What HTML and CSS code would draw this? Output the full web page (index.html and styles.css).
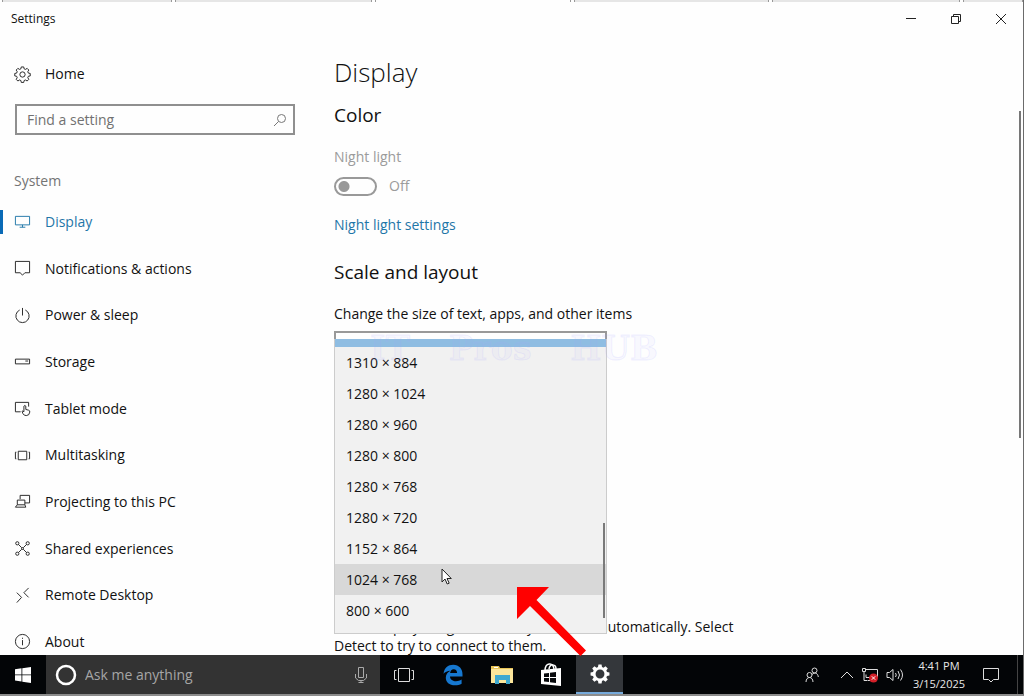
FILE: index.html
```html
<!DOCTYPE html>
<html lang="en">
<head>
    <meta charset="UTF-8">
    <meta name="viewport" content="width=device-width, initial-scale=1.0">
    <title>Settings</title>
    <link rel="stylesheet" href="styles.css">
</head>
<body>
    <div class="tabstrip">
      <span></span><span></span><span class="active"></span><span></span><span></span><span></span>
    </div>

    <header class="titlebar">
      <span class="title">Settings</span>
      <div class="window-buttons">
        <button type="button" aria-label="Minimize">
          <svg width="12" height="12" viewBox="0 0 12 12"><path d="M1 5.5h10"/></svg>
        </button>
        <button type="button" aria-label="Restore">
          <svg width="12" height="12" viewBox="0 0 12 12"><path d="M1.5 3.5h7v7h-7zM3.5 3.500v-2h7v7h-2"/></svg>
        </button>
        <button type="button" aria-label="Close">
          <svg width="12" height="12" viewBox="0 0 12 12"><path d="M1 1l10 10M11 1L1 11"/></svg>
        </button>
      </div>
    </header>

    <div class="window">
      <aside class="sidebar">
        <a class="item home" href="#">
          <svg viewBox="0 0 18 18"><path d="M7.700 1h2.600l.4 2 1.500.6 1.700-1.100 1.800 1.800-1.100 1.700.6 1.500 2 .4v2.600l-2 .4-.6 1.500 1.100 1.700-1.800 1.800-1.700-1.100-1.500.6-.4 2H7.700l-.4-2-1.500-.6-1.700 1.100-1.800-1.800 1.100-1.700-.6-1.500-2-.4V7.900l2-.4.6-1.500-1.100-1.700 1.800-1.800 1.700 1.100L7.300 3z"/><circle cx="9" cy="9" r="2.800"/></svg>
          Home
        </a>
        <div class="search">
          <input type="text" placeholder="Find a setting" aria-label="Find a setting">
          <svg width="14" height="14" viewBox="0 0 14 14"><circle cx="8.500" cy="5.500" r="4"/><path d="M5.500 8.500L1 13"/></svg>
        </div>
        <h3>System</h3>
        <nav>
          <a class="item current" href="#">
            <svg viewBox="0 0 18 18"><path d="M1.500 2.500h15v9h-15zM9 11.500v2.500M6 14h6"/></svg>
            Display
          </a>
          <a class="item" href="#">
            <svg viewBox="0 0 18 18"><path d="M1.500 1.500h15v12h-5L9 16l-2.500-2.500h-5z"/></svg>
            Notifications &amp; actions
          </a>
          <a class="item" href="#">
            <svg viewBox="0 0 18 18"><path d="M9 1v8M6 3.200a7 7 0 1 0 6 0"/></svg>
            Power &amp; sleep
          </a>
          <a class="item" href="#">
            <svg viewBox="0 0 18 18"><path d="M1.500 6.500h15v5h-15zM12 8.500h3"/></svg>
            Storage
          </a>
          <a class="item" href="#">
            <svg viewBox="0 0 18 18"><path d="M7 12.500H1.500v-10h14V7M10.500 12V6.500q1-1.500 2 0V10l3 .8q1.500.4 1.200 2-.4 3.700-3.700 3.700-2.500 0-3.500-2l-1-2.500q.7-1 2 .5z"/></svg>
            Tablet mode
          </a>
          <a class="item" href="#">
            <svg viewBox="0 0 18 18"><path d="M4.500 4.500h9v9h-9zM2.500 5.500h-1v7h1M15.500 5.500h1v7h-1"/></svg>
            Multitasking
          </a>
          <a class="item" href="#">
            <svg viewBox="0 0 18 18"><path d="M6.500 6.500v-4h10v8h-5M3.500 7.500h8v5h-8zM3.500 12.500l-2 2.500h11l-1-2.500"/></svg>
            Projecting to this PC
          </a>
          <a class="item" href="#">
            <svg viewBox="0 0 18 18"><circle cx="3.500" cy="3.500" r="1.700"/><circle cx="14.500" cy="3.500" r="1.700"/><circle cx="3.500" cy="14.500" r="1.700"/><circle cx="14.500" cy="14.500" r="1.700"/><circle cx="9" cy="9" r="1"/><path d="M4.700 4.700l3.500 3.500M13.300 4.700L9.800 8.200M4.700 13.300l3.500-3.500M13.300 13.300L9.800 9.800"/></svg>
            Shared experiences
          </a>
          <a class="item" href="#">
            <svg viewBox="0 0 18 18"><path d="M3 6l5 5-5 5.500M15.500 1l-5 5 5 5"/></svg>
            Remote Desktop
          </a>
          <a class="item" href="#">
            <svg viewBox="0 0 18 18"><circle cx="9" cy="9" r="7.500"/><path d="M9 7.500V13M9 5v1.200"/></svg>
            About
          </a>
        </nav>
      </aside>

      <main>
        <h1>Display</h1>
        <h2>Color</h2>
        <label class="disabled" for="nightlight">Night light</label>
        <div class="toggle">
          <input type="checkbox" id="nightlight" disabled>
          <span>Off</span>
        </div>
        <a class="link" href="#">Night light settings</a>

        <h2>Scale and layout</h2>
        <label for="scale">Change the size of text, apps, and other items</label>
        <div class="combo">
          <select id="scale"></select>
          <ul class="popup" role="listbox" aria-label="Resolution">
            <li class="selected" role="option" aria-selected="true"></li>
            <li role="option">1310 × 884</li>
            <li role="option">1280 × 1024</li>
            <li role="option">1280 × 960</li>
            <li role="option">1280 × 800</li>
            <li role="option">1280 × 768</li>
            <li role="option">1280 × 720</li>
            <li role="option">1152 × 864</li>
            <li class="hover" role="option">1024 × 768</li>
            <li role="option">800 × 600</li>
          </ul>
          <div class="watermark"><span>IT</span><span>Pros</span><span>HUB</span></div>
          <svg class="cursor" width="12" height="18" viewBox="0 0 12 18"><path d="M1 1v13l3-3 2.200 5 2-.8L6 10.500h4.300z"/></svg>
          <svg class="arrow" width="70" height="70" viewBox="0 0 70 70"><path d="M0 0h32L19.500 13 69 63.500 63.500 69 13 19 0 32z"/></svg>
        </div>
        <p>Older displays might not always connect automatically. Select Detect to try to connect to them.</p>
      </main>

      <div class="scrollbar"></div>
    </div>

    <footer class="taskbar">
      <button class="start" type="button" aria-label="Start">
        <svg width="16" height="16" viewBox="0 0 16 16"><path d="M0 2.300l6.500-1v6.200H0zM7.300 1.200L16 0v7.500H7.300zM0 8.300h6.500v6.200l-6.500-1zM7.300 8.300H16V16l-8.700-1.300z"/></svg>
      </button>
      <div class="ask">
        <svg width="22" height="22" viewBox="0 0 22 22"><circle cx="11" cy="11" r="9" stroke="#fff" stroke-width="2.500"/></svg>
        <input type="text" placeholder="Ask me anything" aria-label="Ask me anything">
        <svg class="mic" width="14" height="18" viewBox="0 0 14 18"><path d="M4.500 1.500h5v10h-5zM1.500 8v4l3 2.500h5l3-2.500V8M7 14.500V17M4.500 16.500h5"/></svg>
      </div>
      <div class="apps">
        <button type="button" aria-label="Task view">
          <svg width="20" height="16" viewBox="0 0 20 16"><path fill="none" stroke="#ddd" d="M4.500 1.500h11v13h-11zM2.500 3.500h-2v9h2M17.500 3.500h2v9h-2"/></svg>
        </button>
        <button type="button" aria-label="Edge">
          <svg width="20" height="22" viewBox="0 0 20 22"><path fill="#1678d0" d="M.5 9.700C1.300 4 5 .8 10.200.8c6 0 9.300 4.300 9.300 9.500v2.200H7c.2 3.300 3 4.700 6 4.700 2.100 0 4-.6 5.600-1.600v4.200c-1.900 1-4.200 1.500-6.500 1.500-6 0-9.300-3.200-9.300-7.600 0-3.200 1.800-5.700 4.600-7C4.300 6.900 2.200 8 .5 9.700zM7.100 9h7c0-2.500-1.300-3.800-3.400-3.800S7.500 6.700 7.100 9z"/></svg>
        </button>
        <button type="button" aria-label="File Explorer">
          <svg width="22" height="20" viewBox="0 0 22 20"><path fill="#e9c558" d="M0 1h8l1 2h13v15H0z"/><path fill="#fbe69b" d="M0 4h22v14H0z"/><path fill="#fff" d="M3 2h4v1H3z"/><path fill="#3fa9d0" d="M4 10h15v9h-4v-4H8v4H4z"/></svg>
        </button>
        <button type="button" aria-label="Store">
          <svg width="22" height="24" viewBox="0 0 22 24"><path fill="none" stroke="#fff" stroke-width="1.500" d="M5 8c0-9 8-9 9-2M9 6c1-6 7-5 7 0"/><path fill="#fff" d="M1 7l20-2v18L1 21z"/><path fill="#080a0d" d="M4 10.500l5-.6v4H4zM10 9.800l6-.8v5h-6zM4 15h5v4l-5-.5zM10 15h6v5l-6-.8z"/></svg>
        </button>
        <button class="open" type="button" aria-label="Settings">
          <svg width="20" height="20" viewBox="0 0 18 18"><path fill="#fff" fill-rule="evenodd" d="M7.600.5h2.800l.4 2.200 1.300.6 1.900-1.300 2 2-1.300 1.900.6 1.300 2.200.4v2.800l-2.200.4-.6 1.300 1.300 1.900-2 2-1.900-1.300-1.300.6-.4 2.200H7.600l-.4-2.200-1.300-.6L4 16l-2-2 1.300-1.900-.6-1.300-2.200-.4V7.600l2.200-.4.6-1.300L2 4l2-2 1.900 1.300 1.300-.6zM9 5a4 4 0 1 0 0 8 4 4 0 0 0 0-8z"/></svg>
        </button>
      </div>
      <div class="tray">
        <svg width="14" height="16" viewBox="0 0 14 16"><circle cx="9.500" cy="3.500" r="2.500"/><circle cx="4.500" cy="8" r="2.500"/><path d="M1 15c0-6 7-6 7 0M7 7.500c3-3 6-1 6.300 2.500"/></svg>
        <svg class="chevron" width="14" height="8" viewBox="0 0 14 8"><path d="M1 7l6-6 6 6"/></svg>
        <svg width="18" height="16" viewBox="0 0 18 16"><path d="M5 2.500h11.500v8M5 7.500v3h4M6.500 13.500H10M1.500 1.500h3v3h-3zM3 5v8.500h3"/><circle cx="12.500" cy="11" r="4.500" fill="#d32029" stroke="none"/><path d="M10.800 9.300l3.400 3.400M14.200 9.300l-3.400 3.400" stroke="#fff"/></svg>
        <svg width="18" height="14" viewBox="0 0 18 14"><path d="M1 4.500h2.500L7 1.500v11l-3.500-3H1zM9.500 5q1.500 2 0 4M12 3q3 4 0 8M14.500 1.500q4 5.500 0 11"/></svg>
        <div class="clock"><span>4:41 PM</span><span>3/15/2025</span></div>
        <svg class="action" width="18" height="18" viewBox="0 0 18 18"><path d="M1.500 2.500h15v11h-5L9 16l-2.500-2.500h-5z"/></svg>
      </div>
    </footer>
</body>
</html>
```
FILE: styles.css
```css
* {
    margin: 0;
    padding: 0;
    box-sizing: border-box;
}

body {
    display: flex;
    flex-direction: column;
    height: 100vh;
    overflow: hidden;
    background-color: #fefefe;
    border-right: 1px solid #6b6b6b;
    border-bottom: 2px solid #8c8c8c;
    color: #111;
    font-family: "Open Sans", "Noto Sans", sans-serif;
    font-size: 14px;
    line-height: 20px;
}

button, input, select {
    font: inherit;
    border: none;
    background: none;
}

a {
    color: inherit;
    text-decoration: none;
}

svg {
    flex: none;
    fill: none;
    stroke: #222;
}

/* strip of tabs above the window */
.tabstrip {
    display: grid;
    grid-template-columns: 170fr 196fr 196fr 194fr 188fr 60fr;
    gap: 3px;
    height: 2px;
    padding-left: 2px;
}

.tabstrip span {
    background-color: #e6e6e6;
    border-left: 1px solid #999;
    border-right: 1px solid #999;
}

.tabstrip .active {
    background-color: #fefefe;
}

.titlebar {
    display: flex;
    justify-content: space-between;
    align-items: center;
    height: 33px;
    padding-left: 11px;
    font-size: 12px;
}

.window-buttons {
    display: flex;
}

.window-buttons button {
    display: flex;
    align-items: center;
    justify-content: center;
    width: 45px;
    height: 32px;
}

.window {
    display: flex;
    flex: 1;
    min-height: 0;
}

.sidebar {
    display: flex;
    flex-direction: column;
    width: 320px;
    padding: 27px 0 1px;
}

.item {
    display: flex;
    align-items: center;
    gap: 14px;
    height: 24px;
    padding-left: 14px;
}

.item svg {
    width: 17px;
    height: 17px;
}

.search {
    display: flex;
    align-items: center;
    height: 31px;
    margin: 18px 25px 0 15px;
    padding: 0 6px 0 10px;
    border: 2px solid #8f8f8f;
}

.search input {
    flex: 1;
    min-width: 0;
}

.search svg {
    stroke: #777;
}

::placeholder {
    color: #717171;
    opacity: 1;
}

h3 {
    margin: 36px 0 19px 14px;
    color: #747474;
    font-size: 14px;
    font-weight: 400;
}

nav {
    display: flex;
    flex: 1;
    flex-direction: column;
    justify-content: space-between;
}

.current {
    padding-left: 11px;
    border-left: 3px solid #0a6ab6;
    color: #1f76a8;
}

.current svg {
    stroke: #1f76a8;
}

main {
    display: flex;
    flex: 1;
    flex-direction: column;
    align-items: flex-start;
    padding: 19px 0 0 14px;
}

h1 {
    font-size: 26px;
    font-weight: 300;
    line-height: 36px;
}

h2 {
    font-size: 19px;
    font-weight: 400;
    line-height: 26px;
    margin: 12px 0 19px;
}

.disabled, .toggle {
    color: #9b9b9b;
}

.toggle {
    display: flex;
    align-items: center;
    gap: 12px;
    margin: 9px 0 19px;
}

.toggle input {
    appearance: none;
    width: 43px;
    height: 19px;
    border: 2px solid #999;
    border-radius: 10px;
    background: radial-gradient(circle at 8px 50%, #999 5px, transparent 6px);
}

.link {
    color: #1f76a8;
    margin-bottom: 12px;
}

.combo {
    position: relative;
    width: 273px;
    margin: 7px 0 254px;
}

.combo select {
    display: block;
    appearance: none;
    width: 100%;
    height: 32px;
    border: 2px solid #999;
}

.popup {
    position: absolute;
    top: 8px;
    left: 0;
    width: 100%;
    padding-bottom: 7px;
    border: 1px solid #ccc;
    border-top: none;
    background-color: #f1f1f1;
    list-style: none;
}

.popup::after {
    content: "";
    position: absolute;
    right: 1px;
    bottom: 15px;
    width: 2px;
    height: 95px;
    background-color: #7a7a7a;
}

.popup li {
    height: 31px;
    padding-left: 11px;
    line-height: 31px;
}

.popup .selected {
    height: 8px;
    background-color: #8fbde2;
}

.popup .hover {
    background-color: #d8d8d8;
}

.watermark {
    position: absolute;
    top: 0;
    left: 36px;
    display: flex;
    justify-content: space-between;
    width: 288px;
    color: rgba(170, 170, 255, 0.08);
    font-family: "DejaVu Serif", serif;
    font-size: 33px;
    font-weight: bold;
    line-height: 36px;
    -webkit-text-stroke: 1px rgba(170, 170, 255, 0.16);
}

.cursor {
    position: absolute;
    top: 237px;
    left: 107px;
    fill: #fff;
}

.arrow {
    position: absolute;
    top: 256px;
    left: 183px;
    fill: #f00;
    stroke: none;
}

main p {
    width: 410px;
    line-height: 19px;
}

.scrollbar {
    width: 2px;
    height: 327px;
    margin: 76px 2px 0 0;
    background-color: #777;
}

.taskbar {
    display: flex;
    height: 39px;
    background-color: #030507;
}

.taskbar button {
    display: flex;
    align-items: center;
    justify-content: center;
    width: 47px;
}

.taskbar .start {
    width: 46px;
}

.taskbar svg {
    stroke: #ddd;
}

.taskbar button svg {
    fill: #fff;
    stroke: none;
}

.ask {
    display: flex;
    align-items: center;
    gap: 8px;
    width: 334px;
    padding: 0 12px 0 9px;
    background-color: #333;
}

.ask input {
    flex: 1;
    min-width: 0;
}

.ask ::placeholder {
    color: #a6a6a6;
}

.taskbar .mic {
    stroke: #aaa;
}

.apps {
    display: flex;
    gap: 2px;
}

.taskbar .open {
    background-color: #34373b;
    border-bottom: 2px solid #76aadb;
}

.tray {
    display: flex;
    align-items: center;
    gap: 7px;
    margin: 0 5px 0 auto;
    padding-right: 17px;
    border-right: 1px solid #444;
}

.chevron {
    margin-left: 14px;
}

.clock {
    display: flex;
    flex-direction: column;
    width: 56px;
    color: #e8e8e8;
    font-size: 11px;
    line-height: 18px;
    text-align: center;
}

.action {
    margin-left: 8px;
}
```
